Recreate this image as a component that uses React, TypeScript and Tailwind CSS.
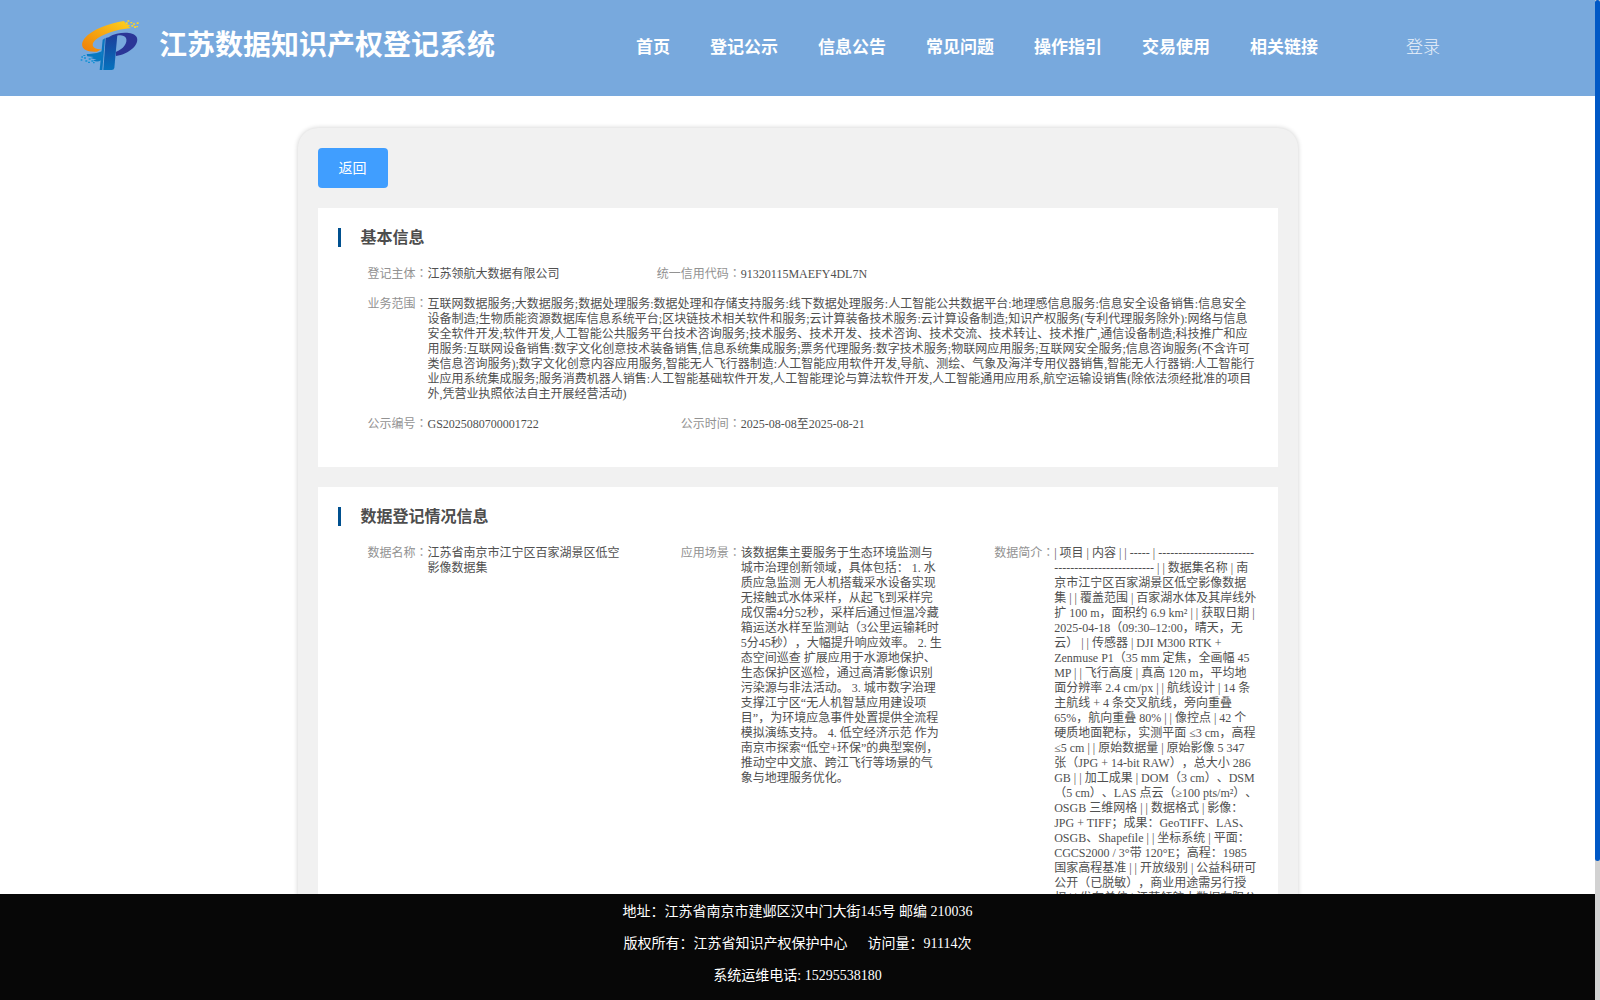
import type { ReactNode } from "react";

const navItems = [
  "首页",
  "登记公示",
  "信息公告",
  "常见问题",
  "操作指引",
  "交易使用",
  "相关链接",
];

const scopeLines = [
  "互联网数据服务;大数据服务;数据处理服务:数据处理和存储支持服务:线下数据处理服务:人工智能公共数据平台:地理感信息服务:信息安全设备销售:信息安全",
  "设备制造;生物质能资源数据库信息系统平台;区块链技术相关软件和服务;云计算装备技术服务:云计算设备制造;知识产权服务(专利代理服务除外):网络与信息",
  "安全软件开发;软件开发,人工智能公共服务平台技术咨询服务;技术服务、技术开发、技术咨询、技术交流、技术转让、技术推广,通信设备制造;科技推广和应",
  "用服务:互联网设备销售:数字文化创意技术装备销售,信息系统集成服务;票务代理服务:数字技术服务;物联网应用服务;互联网安全服务;信息咨询服务(不含许可",
  "类信息咨询服务);数字文化创意内容应用服务,智能无人飞行器制造:人工智能应用软件开发,导航、测绘、气象及海洋专用仪器销售,智能无人行器销:人工智能行",
  "业应用系统集成服务;服务消费机器人销售:人工智能基础软件开发,人工智能理论与算法软件开发,人工智能通用应用系,航空运输设销售(除依法须经批准的项目",
  "外,凭营业执照依法自主开展经营活动)",
];

const sceneLines = [
  "该数据集主要服务于生态环境监测与",
  "城市治理创新领域，具体包括： 1. 水",
  "质应急监测 无人机搭载采水设备实现",
  "无接触式水体采样，从起飞到采样完",
  "成仅需4分52秒，采样后通过恒温冷藏",
  "箱运送水样至监测站（3公里运输耗时",
  "5分45秒），大幅提升响应效率。 2. 生",
  "态空间巡查 扩展应用于水源地保护、",
  "生态保护区巡检，通过高清影像识别",
  "污染源与非法活动。 3. 城市数字治理",
  "支撑江宁区“无人机智慧应用建设项",
  "目”，为环境应急事件处置提供全流程",
  "模拟演练支持。 4. 低空经济示范 作为",
  "南京市探索“低空+环保”的典型案例，",
  "推动空中文旅、跨江飞行等场景的气",
  "象与地理服务优化。",
];

const introLines = [
  "| 项目 | 内容 | | ----- | ------------------------",
  "------------------------- | | 数据集名称 | 南",
  "京市江宁区百家湖景区低空影像数据",
  "集 | | 覆盖范围 | 百家湖水体及其岸线外",
  "扩 100 m，面积约 6.9 km² | | 获取日期 |",
  "2025-04-18（09:30–12:00，晴天，无",
  "云） | | 传感器 | DJI M300 RTK +",
  "Zenmuse P1（35 mm 定焦，全画幅 45",
  "MP | | 飞行高度 | 真高 120 m，平均地",
  "面分辨率 2.4 cm/px | | 航线设计 | 14 条",
  "主航线 + 4 条交叉航线，旁向重叠",
  "65%，航向重叠 80% | | 像控点 | 42 个",
  "硬质地面靶标，实测平面 ≤3 cm，高程",
  "≤5 cm | | 原始数据量 | 原始影像 5 347",
  "张（JPG + 14-bit RAW），总大小 286",
  "GB | | 加工成果 | DOM（3 cm）、DSM",
  "（5 cm）、LAS 点云（≥100 pts/m²）、",
  "OSGB 三维网格 | | 数据格式 | 影像：",
  "JPG + TIFF；成果：GeoTIFF、LAS、",
  "OSGB、Shapefile | | 坐标系统 | 平面：",
  "CGCS2000 / 3°带 120°E；高程：1985",
  "国家高程基准 | | 开放级别 | 公益科研可",
  "公开（已脱敏），商业用途需另行授",
  "权 | | 发布单位 | 江苏领航大数据有限公",
];

function Logo() {
  return (
    <svg viewBox="60 56 180 156" className="h-[52px] w-[60px]">
      <defs>
        <linearGradient id="gold" x1="0" y1="1" x2="1" y2="0">
          <stop offset="0" stopColor="#ee7d08" />
          <stop offset="1" stopColor="#ffd21c" />
        </linearGradient>
        <linearGradient id="stem" x1="0" y1="0" x2="0" y2="1">
          <stop offset="0" stopColor="#1c3f9b" />
          <stop offset="1" stopColor="#0572bd" />
        </linearGradient>
      </defs>
      <path
        d="M192 62C146 69 96 87 74 114C56 137 70 157 111 154L124 147C96 147 92 132 106 119C128 101 169 87 214 83L205 79L211 75L198 71Z"
        fill="url(#gold)"
      />
      <path
        d="M202 60h6v4h-6zM211 65h6v4h-6zM219 69h6v4h-6zM230 66h6v5h-6zM214 74h6v5h-6zM222 78h6v5h-6zM229 77h5v4h-5zM197 66h6v5h-6z"
        fill="#fbd22b"
      />
      <path
        d="M147 109C174 95 218 92 230 110C240 132 208 161 168 167L167 155C190 147 204 127 198 113C192 102 173 103 160 110Z"
        fill="#2b3697"
      />
      <path d="M137 113L172 104L163 203Q162 209 155 209H130Z" fill="url(#stem)" />
      <path d="M128 118L135 114L127 209H119Z" fill="#0b76bf" />
      <path
        d="M80 161Q105 163 126 153L123 180Q111 187 99 180L110 178L91 173L101 170L82 168Z"
        fill="#0879c1"
      />
      <path
        d="M64 168h5v4h-5zM72 171h6v4h-6zM62 177h5v4h-5zM76 180h6v4h-6zM86 174h6v4h-6zM84 184h6v4h-6zM94 180h6v4h-6zM99 185h5v4h-5zM70 164h6v3h-6z"
        fill="#1292d5"
      />
    </svg>
  );
}

function Card({ title, children }: { title: string; children: ReactNode }) {
  return (
    <section className="mt-5 bg-white pt-5 pr-5 pb-[35px]">
      <h2 className="ml-5 h-[19px] border-l-3 border-[#00508f] pl-5 text-base leading-5 font-bold text-[#4d4d4d]">
        {title}
      </h2>
      <div className="mt-5 space-y-[15px]">{children}</div>
    </section>
  );
}

function Field({ label, lines }: { label: string; lines: string[] }) {
  return (
    <div className="flex text-xs leading-[15px] whitespace-nowrap">
      <div className="h-[15px] w-[110px] shrink-0 text-right text-[#929292]">
        {label}
        <span
          lang="zh-TW"
          className="font-['Liberation_Serif','Noto_Sans_CJK_TC',serif]"
        >
          ：
        </span>
      </div>
      <div className="text-[#505050]">
        {lines.map((line) => (
          <div key={line} className="h-[15px]">
            {line}
          </div>
        ))}
      </div>
    </div>
  );
}

export default function App() {
  return (
    <div
      lang="zh-CN"
      className="flex h-screen overflow-hidden bg-white font-['Liberation_Serif','Noto_Sans_CJK_SC',serif] [text-spacing-trim:space-all]"
    >
      <div className="flex min-w-0 flex-1 flex-col">
        {/* Header */}
        <header className="flex h-24 shrink-0 items-center bg-[#78a9dd] pl-20 whitespace-nowrap text-white">
          <div className="pb-1.5">
            <Logo />
          </div>
          <h1 className="ml-[19px] w-[477px] pb-1 text-[28px] leading-9 font-bold">
            江苏数据知识产权登记系统
          </h1>
          <nav className="flex gap-10 text-[17px] font-bold">
            {navItems.map((item) => (
              <a key={item}>{item}</a>
            ))}
          </nav>
          <a className="ml-[88px] text-[17px] font-light text-white/85">登录</a>
        </header>

        {/* Detail panel */}
        <main className="min-h-0 flex-1 overflow-hidden pt-8">
          <div className="mx-auto h-[1100px] w-[1000px] rounded-[20px] bg-[#f1f1f1] p-5 shadow-[0_0_5px_rgba(0,0,0,0.2)]">
            <button className="block h-10 w-[70px] rounded-[4px] bg-[#409eff] pt-px text-sm text-white">
              返回
            </button>
            <Card title="基本信息">
              <div className="grid grid-cols-3">
                <Field label="登记主体" lines={["江苏领航大数据有限公司"]} />
                <Field label="统一信用代码" lines={["91320115MAEFY4DL7N"]} />
              </div>
              <Field label="业务范围" lines={scopeLines} />
              <div className="grid grid-cols-3">
                <Field label="公示编号" lines={["GS2025080700001722"]} />
                <Field label="公示时间" lines={["2025-08-08至2025-08-21"]} />
              </div>
            </Card>
            <Card title="数据登记情况信息">
              <div className="grid grid-cols-3">
                <Field
                  label="数据名称"
                  lines={["江苏省南京市江宁区百家湖景区低空", "影像数据集"]}
                />
                <Field label="应用场景" lines={sceneLines} />
                <Field label="数据简介" lines={introLines} />
              </div>
            </Card>
          </div>
        </main>

        {/* Footer */}
        <footer className="h-[106px] shrink-0 bg-[#070707] pt-0.5 text-center text-sm leading-8 text-white">
          <p>地址：江苏省南京市建邺区汉中门大街145号 邮编 210036</p>
          <p>
            版权所有：江苏省知识产权保护中心
            <span className="ml-5">访问量：91114次</span>
          </p>
          <p>系统运维电话: 15295538180</p>
        </footer>
      </div>

      {/* Scrollbar */}
      <div className="w-[5px] bg-[#d2d2d2]">
        <div className="h-[861px] rounded-full bg-[#0058c6]" />
      </div>
    </div>
  );
}
